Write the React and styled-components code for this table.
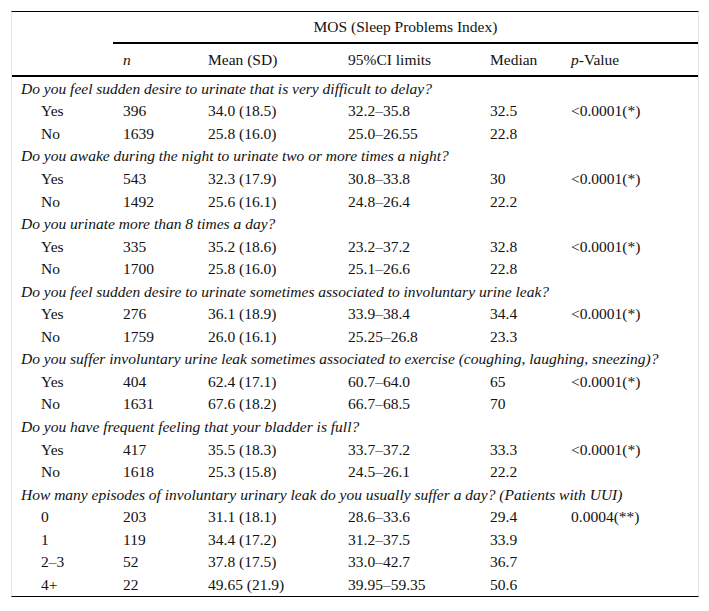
import React from 'react';
import styled, { createGlobalStyle } from 'styled-components';

const GlobalStyle = createGlobalStyle`
	html, body {
		margin: 0;
		padding: 0;
		background: #fff;
	}
`;

const Page = styled.div`padding: 11px 0 0 11px;`;

const Frame = styled.div`
	width: 686px;
	border-top: 1px solid #000;
	border-bottom: 1px solid #000;
	border-left: 1px solid #e4e4e4;
	border-right: 1px solid #e4e4e4;
	font-family: "Liberation Serif", "Times New Roman", serif;
	font-size: 15.5px;
	color: #111;
`;

const Table = styled.table`
	width: 100%;
	border-collapse: collapse;
	table-layout: fixed;
`;

const HeadCell = styled.th`
	font-weight: normal;
	text-align: ${(p) => (p.center ? 'center' : 'left')};
	padding: 0 0 0 ${(p) => (p.center ? 0 : 10)}px;
	height: ${(p) => p.h}px;
	border-bottom: ${(p) => (p.rule ? '2px solid #000' : 'none')};
	vertical-align: middle;
	white-space: nowrap;
`;

const HeadRow = styled.tr`
	border-bottom: ${(p) => (p.rule ? '2px solid #000' : 'none')};
`;

const Question = styled.td`
	font-style: italic;
	padding: 0 0 0 9px;
	height: 22.55px;
	line-height: 17px;
	white-space: nowrap;
`;

const Cell = styled.td`
	padding: 0 0 0 ${(p) => (p.indent ? 29 : 10)}px;
	height: 22.55px;
	line-height: 17px;
	white-space: nowrap;
`;

const groups = [
	{
		q: 'Do you feel sudden desire to urinate that is very difficult to delay?',
		rows: [
			['Yes', '396', '34.0 (18.5)', '32.2–35.8', '32.5', '<0.0001(*)'],
			['No', '1639', '25.8 (16.0)', '25.0–26.55', '22.8', ''],
		],
	},
	{
		q: 'Do you awake during the night to urinate two or more times a night?',
		rows: [
			['Yes', '543', '32.3 (17.9)', '30.8–33.8', '30', '<0.0001(*)'],
			['No', '1492', '25.6 (16.1)', '24.8–26.4', '22.2', ''],
		],
	},
	{
		q: 'Do you urinate more than 8 times a day?',
		rows: [
			['Yes', '335', '35.2 (18.6)', '23.2–37.2', '32.8', '<0.0001(*)'],
			['No', '1700', '25.8 (16.0)', '25.1–26.6', '22.8', ''],
		],
	},
	{
		q: 'Do you feel sudden desire to urinate sometimes associated to involuntary urine leak?',
		rows: [
			['Yes', '276', '36.1 (18.9)', '33.9–38.4', '34.4', '<0.0001(*)'],
			['No', '1759', '26.0 (16.1)', '25.25–26.8', '23.3', ''],
		],
	},
	{
		q: 'Do you suffer involuntary urine leak sometimes associated to exercise (coughing, laughing, sneezing)?',
		rows: [
			['Yes', '404', '62.4 (17.1)', '60.7–64.0', '65', '<0.0001(*)'],
			['No', '1631', '67.6 (18.2)', '66.7–68.5', '70', ''],
		],
	},
	{
		q: 'Do you have frequent feeling that your bladder is full?',
		rows: [
			['Yes', '417', '35.5 (18.3)', '33.7–37.2', '33.3', '<0.0001(*)'],
			['No', '1618', '25.3 (15.8)', '24.5–26.1', '22.2', ''],
		],
	},
	{
		q: 'How many episodes of involuntary urinary leak do you usually suffer a day? (Patients with UUI)',
		rows: [
			['0', '203', '31.1 (18.1)', '28.6–33.6', '29.4', '0.0004(**)'],
			['1', '119', '34.4 (17.2)', '31.2–37.5', '33.9', ''],
			['2–3', '52', '37.8 (17.5)', '33.0–42.7', '36.7', ''],
			['4+', '22', '49.65 (21.9)', '39.95–59.35', '50.6', ''],
		],
	},
];

function App() {
	let body = [];

	groups.forEach((g, gi) => {
		body.push(
			<tr key={`q${gi}`}>
				<Question colSpan={6}>{g.q}</Question>
			</tr>
		);
		g.rows.forEach((r, ri) => {
			body.push(
				<tr key={`r${gi}-${ri}`}>
					<Cell indent>{r[0]}</Cell>
					<Cell>{r[1]}</Cell>
					<Cell>{r[2]}</Cell>
					<Cell>{r[3]}</Cell>
					<Cell>{r[4]}</Cell>
					<Cell>{r[5]}</Cell>
				</tr>
			);
		});
	});

	return (
		<Page>
			<GlobalStyle />
			<Frame>
				<Table>
					<colgroup>
						<col style={{ width: 101 }} />
						<col style={{ width: 85 }} />
						<col style={{ width: 140 }} />
						<col style={{ width: 142 }} />
						<col style={{ width: 81 }} />
						<col />
					</colgroup>
					<thead>
						<tr>
							<HeadCell h={30} />
							<HeadCell h={30} colSpan={5} center rule>
								MOS (Sleep Problems Index)
							</HeadCell>
						</tr>
						<HeadRow rule>
							<HeadCell h={31} />
							<HeadCell h={31}>
								<i>n</i>
							</HeadCell>
							<HeadCell h={31}>Mean (SD)</HeadCell>
							<HeadCell h={31}>95%CI limits</HeadCell>
							<HeadCell h={31}>Median</HeadCell>
							<HeadCell h={31}>
								<i>p</i>-Value
							</HeadCell>
						</HeadRow>
					</thead>
					<tbody>{body}</tbody>
				</Table>
			</Frame>
		</Page>
	);
}

export default App;
